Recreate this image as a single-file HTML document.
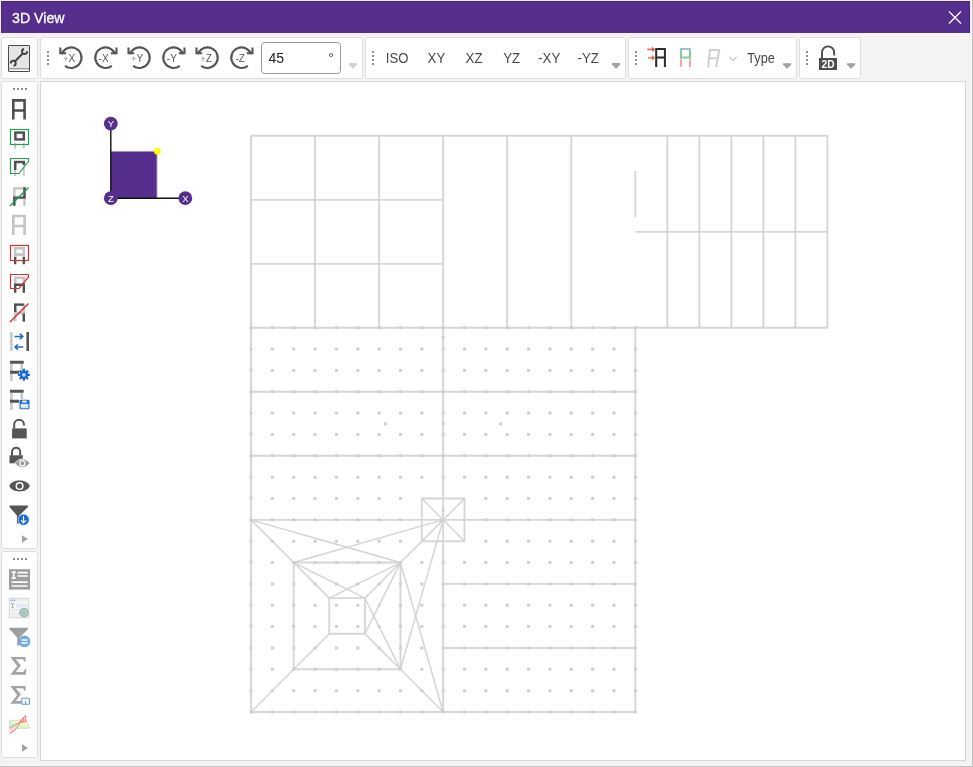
<!DOCTYPE html>
<html><head><meta charset="utf-8">
<style>
html,body{margin:0;padding:0;}
body{width:973px;height:767px;position:relative;overflow:hidden;background:#f3f3f3;font-family:"Liberation Sans",sans-serif;}
.a{position:absolute;}
.grp{position:absolute;background:#fff;border:1px solid #dedede;border-radius:3px;box-sizing:border-box;}
.lbl{position:absolute;font-size:14px;color:#444;line-height:1;white-space:nowrap;}
svg{position:absolute;overflow:visible;will-change:transform;}
.lbl{will-change:transform;}
</style></head><body>
<!-- window frame -->
<div class="a" style="left:0;top:0;width:973px;height:1px;background:#eef0e9;"></div>
<div class="a" style="left:0;top:0;width:1px;height:767px;background:#f0f1ec;"></div>
<div class="a" style="left:971px;top:0;width:1px;height:767px;background:#f8f8f8;"></div>
<div class="a" style="left:0;top:765px;width:973px;height:1px;background:#f8f8f8;"></div>
<div class="a" style="left:972px;top:0;width:1px;height:767px;background:#c0c0c0;"></div>
<div class="a" style="left:0;top:766px;width:973px;height:1px;background:#c0c0c0;"></div>
<div class="a" style="left:970px;top:0;width:1px;height:34px;background:#eef0e9;"></div>
<!-- title -->
<div class="a" style="left:1px;top:1px;width:969px;height:32px;background:#562f8e;box-sizing:border-box;border-top:1px solid #4a2189;border-left:1px solid #4d2489;border-right:1px solid #4d2489;"></div>
<div class="lbl" style="left:12.4px;top:11px;color:#fff;font-size:14.2px;-webkit-text-stroke:0.3px #fff;">3D View</div>
<svg style="left:0;top:0" width="973" height="40"><path d="M949 11.5 L961 23.5 M961 11.5 L949 23.5" stroke="#fff" stroke-width="1.2"/></svg>

<!-- top toolbar groups -->
<div class="grp" style="left:1px;top:37px;width:37px;height:42px;"></div>
<div class="grp" style="left:40px;top:37px;width:323px;height:42px;"></div>
<div class="grp" style="left:365px;top:37px;width:261px;height:42px;"></div>
<div class="grp" style="left:628px;top:37px;width:169px;height:42px;"></div>
<div class="grp" style="left:799px;top:37px;width:62px;height:42px;"></div>

<!-- left toolbar groups -->
<div class="grp" style="left:1px;top:81px;width:37px;height:468px;"></div>
<div class="grp" style="left:1px;top:551px;width:37px;height:207px;"></div>

<!-- canvas -->
<div class="a" style="left:40px;top:81px;width:926px;height:680px;background:#fff;border:1px solid #d6d6d6;box-sizing:border-box;"></div>

<!--DRAW--><svg class="draw" style="left:0;top:0" width="973" height="767"><path d="M251.00 135.80L827.45 135.80M251.00 135.80L251.00 712.00M315.05 135.80L315.05 327.70M379.10 135.80L379.10 327.70M443.15 135.80L443.15 327.70M507.20 135.80L507.20 327.70M571.25 135.80L571.25 327.70M443.15 327.70L443.15 712.00M251.00 199.85L443.15 199.85M251.00 263.90L443.15 263.90M251.00 327.70L827.45 327.70M667.32 135.80L667.32 327.70M699.35 135.80L699.35 327.70M731.38 135.80L731.38 327.70M763.40 135.80L763.40 327.70M795.42 135.80L795.42 327.70M827.45 135.80L827.45 327.70M635.30 171.00L635.30 217.20M635.30 231.90L827.45 231.90M635.30 327.70L635.30 712.00M251.00 391.75L635.30 391.75M251.00 455.80L635.30 455.80M251.00 519.85L635.30 519.85M443.15 583.90L635.30 583.90M443.15 647.95L635.30 647.95M251.00 712.00L635.30 712.00M421.80 498.50H464.50V541.20H421.80ZM293.70 562.55H400.45V669.30H293.70ZM329.28 598.13H364.87V633.72H329.28Z" fill="none" stroke="#d6d6d6" stroke-width="1.9"/><path d="M421.80 498.50L464.50 541.20M464.50 498.50L421.80 541.20M293.70 562.55L329.28 598.13M400.45 562.55L364.87 598.13M293.70 669.30L329.28 633.72M400.45 669.30L364.87 633.72M293.70 562.55L364.87 598.13M400.45 562.55L329.28 598.13M400.45 562.55L364.87 633.72M364.87 598.13L400.45 669.30M251.00 519.85L293.70 562.55M251.00 519.85L400.45 562.55M443.15 519.85L293.70 562.55M443.15 519.85L400.45 562.55M443.15 519.85L400.45 669.30M400.45 562.55L443.15 712.00M400.45 669.30L443.15 712.00M293.70 669.30L251.00 712.00" fill="none" stroke="#d4d4d4" stroke-width="1.5"/><path d="M249.50 326.20h3v3h-3zM249.50 347.55h3v3h-3zM249.50 368.90h3v3h-3zM249.50 390.25h3v3h-3zM249.50 411.60h3v3h-3zM249.50 432.95h3v3h-3zM249.50 454.30h3v3h-3zM249.50 475.65h3v3h-3zM249.50 497.00h3v3h-3zM249.50 518.35h3v3h-3zM249.50 539.70h3v3h-3zM249.50 561.05h3v3h-3zM249.50 582.40h3v3h-3zM249.50 603.75h3v3h-3zM249.50 625.10h3v3h-3zM249.50 646.45h3v3h-3zM249.50 667.80h3v3h-3zM249.50 689.15h3v3h-3zM249.50 710.50h3v3h-3zM270.85 326.20h3v3h-3zM270.85 347.55h3v3h-3zM270.85 368.90h3v3h-3zM270.85 390.25h3v3h-3zM270.85 411.60h3v3h-3zM270.85 432.95h3v3h-3zM270.85 454.30h3v3h-3zM270.85 475.65h3v3h-3zM270.85 497.00h3v3h-3zM270.85 518.35h3v3h-3zM270.85 539.70h3v3h-3zM270.85 561.05h3v3h-3zM270.85 582.40h3v3h-3zM270.85 603.75h3v3h-3zM270.85 625.10h3v3h-3zM270.85 646.45h3v3h-3zM270.85 667.80h3v3h-3zM270.85 689.15h3v3h-3zM270.85 710.50h3v3h-3zM292.20 326.20h3v3h-3zM292.20 347.55h3v3h-3zM292.20 368.90h3v3h-3zM292.20 390.25h3v3h-3zM292.20 411.60h3v3h-3zM292.20 432.95h3v3h-3zM292.20 454.30h3v3h-3zM292.20 475.65h3v3h-3zM292.20 497.00h3v3h-3zM292.20 518.35h3v3h-3zM292.20 539.70h3v3h-3zM292.20 561.05h3v3h-3zM292.20 582.40h3v3h-3zM292.20 603.75h3v3h-3zM292.20 625.10h3v3h-3zM292.20 646.45h3v3h-3zM292.20 667.80h3v3h-3zM292.20 689.15h3v3h-3zM292.20 710.50h3v3h-3zM313.55 326.20h3v3h-3zM313.55 347.55h3v3h-3zM313.55 368.90h3v3h-3zM313.55 390.25h3v3h-3zM313.55 411.60h3v3h-3zM313.55 432.95h3v3h-3zM313.55 454.30h3v3h-3zM313.55 475.65h3v3h-3zM313.55 497.00h3v3h-3zM313.55 518.35h3v3h-3zM313.55 539.70h3v3h-3zM313.55 561.05h3v3h-3zM313.55 582.40h3v3h-3zM313.55 603.75h3v3h-3zM313.55 625.10h3v3h-3zM313.55 646.45h3v3h-3zM313.55 667.80h3v3h-3zM313.55 689.15h3v3h-3zM313.55 710.50h3v3h-3zM334.90 326.20h3v3h-3zM334.90 347.55h3v3h-3zM334.90 368.90h3v3h-3zM334.90 390.25h3v3h-3zM334.90 411.60h3v3h-3zM334.90 432.95h3v3h-3zM334.90 454.30h3v3h-3zM334.90 475.65h3v3h-3zM334.90 497.00h3v3h-3zM334.90 518.35h3v3h-3zM334.90 539.70h3v3h-3zM334.90 561.05h3v3h-3zM334.90 582.40h3v3h-3zM334.90 603.75h3v3h-3zM334.90 625.10h3v3h-3zM334.90 646.45h3v3h-3zM334.90 667.80h3v3h-3zM334.90 689.15h3v3h-3zM334.90 710.50h3v3h-3zM356.25 326.20h3v3h-3zM356.25 347.55h3v3h-3zM356.25 368.90h3v3h-3zM356.25 390.25h3v3h-3zM356.25 411.60h3v3h-3zM356.25 432.95h3v3h-3zM356.25 454.30h3v3h-3zM356.25 475.65h3v3h-3zM356.25 497.00h3v3h-3zM356.25 518.35h3v3h-3zM356.25 539.70h3v3h-3zM356.25 561.05h3v3h-3zM356.25 582.40h3v3h-3zM356.25 603.75h3v3h-3zM356.25 625.10h3v3h-3zM356.25 646.45h3v3h-3zM356.25 667.80h3v3h-3zM356.25 689.15h3v3h-3zM356.25 710.50h3v3h-3zM377.60 326.20h3v3h-3zM377.60 347.55h3v3h-3zM377.60 368.90h3v3h-3zM377.60 390.25h3v3h-3zM377.60 411.60h3v3h-3zM377.60 432.95h3v3h-3zM377.60 454.30h3v3h-3zM377.60 475.65h3v3h-3zM377.60 497.00h3v3h-3zM377.60 518.35h3v3h-3zM377.60 539.70h3v3h-3zM377.60 561.05h3v3h-3zM377.60 582.40h3v3h-3zM377.60 603.75h3v3h-3zM377.60 625.10h3v3h-3zM377.60 646.45h3v3h-3zM377.60 667.80h3v3h-3zM377.60 689.15h3v3h-3zM377.60 710.50h3v3h-3zM398.95 326.20h3v3h-3zM398.95 347.55h3v3h-3zM398.95 368.90h3v3h-3zM398.95 390.25h3v3h-3zM398.95 411.60h3v3h-3zM398.95 432.95h3v3h-3zM398.95 454.30h3v3h-3zM398.95 475.65h3v3h-3zM398.95 497.00h3v3h-3zM398.95 518.35h3v3h-3zM398.95 539.70h3v3h-3zM398.95 561.05h3v3h-3zM398.95 582.40h3v3h-3zM398.95 603.75h3v3h-3zM398.95 625.10h3v3h-3zM398.95 646.45h3v3h-3zM398.95 667.80h3v3h-3zM398.95 689.15h3v3h-3zM398.95 710.50h3v3h-3zM420.30 326.20h3v3h-3zM420.30 347.55h3v3h-3zM420.30 368.90h3v3h-3zM420.30 390.25h3v3h-3zM420.30 411.60h3v3h-3zM420.30 432.95h3v3h-3zM420.30 454.30h3v3h-3zM420.30 475.65h3v3h-3zM420.30 561.05h3v3h-3zM420.30 582.40h3v3h-3zM420.30 603.75h3v3h-3zM420.30 625.10h3v3h-3zM420.30 646.45h3v3h-3zM420.30 667.80h3v3h-3zM420.30 689.15h3v3h-3zM420.30 710.50h3v3h-3zM441.65 326.20h3v3h-3zM441.65 347.55h3v3h-3zM441.65 368.90h3v3h-3zM441.65 390.25h3v3h-3zM441.65 411.60h3v3h-3zM441.65 432.95h3v3h-3zM441.65 454.30h3v3h-3zM441.65 475.65h3v3h-3zM441.65 561.05h3v3h-3zM441.65 582.40h3v3h-3zM441.65 603.75h3v3h-3zM441.65 625.10h3v3h-3zM441.65 646.45h3v3h-3zM441.65 667.80h3v3h-3zM441.65 689.15h3v3h-3zM441.65 710.50h3v3h-3zM463.00 326.20h3v3h-3zM463.00 347.55h3v3h-3zM463.00 368.90h3v3h-3zM463.00 390.25h3v3h-3zM463.00 411.60h3v3h-3zM463.00 432.95h3v3h-3zM463.00 454.30h3v3h-3zM463.00 475.65h3v3h-3zM463.00 561.05h3v3h-3zM463.00 582.40h3v3h-3zM463.00 603.75h3v3h-3zM463.00 625.10h3v3h-3zM463.00 646.45h3v3h-3zM463.00 667.80h3v3h-3zM463.00 689.15h3v3h-3zM463.00 710.50h3v3h-3zM484.35 326.20h3v3h-3zM484.35 347.55h3v3h-3zM484.35 368.90h3v3h-3zM484.35 390.25h3v3h-3zM484.35 411.60h3v3h-3zM484.35 432.95h3v3h-3zM484.35 454.30h3v3h-3zM484.35 475.65h3v3h-3zM484.35 497.00h3v3h-3zM484.35 518.35h3v3h-3zM484.35 539.70h3v3h-3zM484.35 561.05h3v3h-3zM484.35 582.40h3v3h-3zM484.35 603.75h3v3h-3zM484.35 625.10h3v3h-3zM484.35 646.45h3v3h-3zM484.35 667.80h3v3h-3zM484.35 689.15h3v3h-3zM484.35 710.50h3v3h-3zM505.70 326.20h3v3h-3zM505.70 347.55h3v3h-3zM505.70 368.90h3v3h-3zM505.70 390.25h3v3h-3zM505.70 411.60h3v3h-3zM505.70 432.95h3v3h-3zM505.70 454.30h3v3h-3zM505.70 475.65h3v3h-3zM505.70 497.00h3v3h-3zM505.70 518.35h3v3h-3zM505.70 539.70h3v3h-3zM505.70 561.05h3v3h-3zM505.70 582.40h3v3h-3zM505.70 603.75h3v3h-3zM505.70 625.10h3v3h-3zM505.70 646.45h3v3h-3zM505.70 667.80h3v3h-3zM505.70 689.15h3v3h-3zM505.70 710.50h3v3h-3zM527.05 326.20h3v3h-3zM527.05 347.55h3v3h-3zM527.05 368.90h3v3h-3zM527.05 390.25h3v3h-3zM527.05 411.60h3v3h-3zM527.05 432.95h3v3h-3zM527.05 454.30h3v3h-3zM527.05 475.65h3v3h-3zM527.05 497.00h3v3h-3zM527.05 518.35h3v3h-3zM527.05 539.70h3v3h-3zM527.05 561.05h3v3h-3zM527.05 582.40h3v3h-3zM527.05 603.75h3v3h-3zM527.05 625.10h3v3h-3zM527.05 646.45h3v3h-3zM527.05 667.80h3v3h-3zM527.05 689.15h3v3h-3zM527.05 710.50h3v3h-3zM548.40 326.20h3v3h-3zM548.40 347.55h3v3h-3zM548.40 368.90h3v3h-3zM548.40 390.25h3v3h-3zM548.40 411.60h3v3h-3zM548.40 432.95h3v3h-3zM548.40 454.30h3v3h-3zM548.40 475.65h3v3h-3zM548.40 497.00h3v3h-3zM548.40 518.35h3v3h-3zM548.40 539.70h3v3h-3zM548.40 561.05h3v3h-3zM548.40 582.40h3v3h-3zM548.40 603.75h3v3h-3zM548.40 625.10h3v3h-3zM548.40 646.45h3v3h-3zM548.40 667.80h3v3h-3zM548.40 689.15h3v3h-3zM548.40 710.50h3v3h-3zM569.75 326.20h3v3h-3zM569.75 347.55h3v3h-3zM569.75 368.90h3v3h-3zM569.75 390.25h3v3h-3zM569.75 411.60h3v3h-3zM569.75 432.95h3v3h-3zM569.75 454.30h3v3h-3zM569.75 475.65h3v3h-3zM569.75 497.00h3v3h-3zM569.75 518.35h3v3h-3zM569.75 539.70h3v3h-3zM569.75 561.05h3v3h-3zM569.75 582.40h3v3h-3zM569.75 603.75h3v3h-3zM569.75 625.10h3v3h-3zM569.75 646.45h3v3h-3zM569.75 667.80h3v3h-3zM569.75 689.15h3v3h-3zM569.75 710.50h3v3h-3zM591.10 326.20h3v3h-3zM591.10 347.55h3v3h-3zM591.10 368.90h3v3h-3zM591.10 390.25h3v3h-3zM591.10 411.60h3v3h-3zM591.10 432.95h3v3h-3zM591.10 454.30h3v3h-3zM591.10 475.65h3v3h-3zM591.10 497.00h3v3h-3zM591.10 518.35h3v3h-3zM591.10 539.70h3v3h-3zM591.10 561.05h3v3h-3zM591.10 582.40h3v3h-3zM591.10 603.75h3v3h-3zM591.10 625.10h3v3h-3zM591.10 646.45h3v3h-3zM591.10 667.80h3v3h-3zM591.10 689.15h3v3h-3zM591.10 710.50h3v3h-3zM612.45 326.20h3v3h-3zM612.45 347.55h3v3h-3zM612.45 368.90h3v3h-3zM612.45 390.25h3v3h-3zM612.45 411.60h3v3h-3zM612.45 432.95h3v3h-3zM612.45 454.30h3v3h-3zM612.45 475.65h3v3h-3zM612.45 497.00h3v3h-3zM612.45 518.35h3v3h-3zM612.45 539.70h3v3h-3zM612.45 561.05h3v3h-3zM612.45 582.40h3v3h-3zM612.45 603.75h3v3h-3zM612.45 625.10h3v3h-3zM612.45 646.45h3v3h-3zM612.45 667.80h3v3h-3zM612.45 689.15h3v3h-3zM612.45 710.50h3v3h-3zM633.80 326.20h3v3h-3zM633.80 347.55h3v3h-3zM633.80 368.90h3v3h-3zM633.80 390.25h3v3h-3zM633.80 411.60h3v3h-3zM633.80 432.95h3v3h-3zM633.80 454.30h3v3h-3zM633.80 475.65h3v3h-3zM633.80 497.00h3v3h-3zM633.80 518.35h3v3h-3zM633.80 539.70h3v3h-3zM633.80 561.05h3v3h-3zM633.80 582.40h3v3h-3zM633.80 603.75h3v3h-3zM633.80 625.10h3v3h-3zM633.80 646.45h3v3h-3zM633.80 667.80h3v3h-3zM633.80 689.15h3v3h-3zM633.80 710.50h3v3h-3zM383.90 422.30h3v3h-3zM499.10 422.30h3v3h-3zM441.65 336.00h3v3h-3zM441.65 422.30h3v3h-3zM441.65 508.80h3v3h-3z" fill="#cfcfcf"/></svg><!--/DRAW-->
<!--ICONS--><svg style="left:0;top:0" width="973" height="767" font-family="Liberation Sans, sans-serif">
<!-- wrench box -->
<rect x="8.5" y="45.5" width="21" height="26" rx="0.5" fill="#e4e5e5" stroke="#4a4a4a" stroke-width="1"/>
<rect x="9" y="68" width="20" height="1.6" fill="#9c9c9c"/>
<rect x="9" y="69.6" width="20" height="1.4" fill="#fff"/>
<path d="M14.6 61.8 L23.1 53.1" stroke="#404040" stroke-width="2"/>
<path d="M24.07 49.04 A2.5 2.5 0 1 0 26.99 51.28" fill="none" stroke="#404040" stroke-width="1.9"/>
<path d="M13.63 65.76 A2.5 2.5 0 1 0 10.71 63.52" fill="none" stroke="#404040" stroke-width="1.9"/>
<!-- grips -->
<g fill="#8e8e98">
<rect x="47" y="51" width="2" height="2"/><rect x="47" y="55" width="2" height="2"/><rect x="47" y="59" width="2" height="2"/><rect x="47" y="63" width="2" height="2"/>
<rect x="372" y="51" width="2" height="2"/><rect x="372" y="55" width="2" height="2"/><rect x="372" y="59" width="2" height="2"/><rect x="372" y="63" width="2" height="2"/>
<rect x="635" y="51" width="2" height="2"/><rect x="635" y="55" width="2" height="2"/><rect x="635" y="59" width="2" height="2"/><rect x="635" y="63" width="2" height="2"/>
<rect x="806" y="51" width="2" height="2"/><rect x="806" y="55" width="2" height="2"/><rect x="806" y="59" width="2" height="2"/><rect x="806" y="63" width="2" height="2"/>
<rect x="13" y="88" width="2" height="2"/><rect x="17" y="88" width="2" height="2"/><rect x="21" y="88" width="2" height="2"/><rect x="25" y="88" width="2" height="2"/>
<rect x="13" y="558" width="2" height="2"/><rect x="17" y="558" width="2" height="2"/><rect x="21" y="558" width="2" height="2"/><rect x="25" y="558" width="2" height="2"/>
</g>

<!-- rotate icons -->

<g transform="translate(71.3 57.6)"><path d="M-6.3 8.3 A10.3 10.3 0 1 0 -9.8 -3.4" fill="none" stroke="#555" stroke-width="2.2"/><path d="M-11 -10.2 V-4.4 H-5.3" fill="none" stroke="#555" stroke-width="2.1" stroke-linejoin="miter"/></g>
<g transform="translate(105.5 57.6) scale(-1 1)"><path d="M-6.3 8.3 A10.3 10.3 0 1 0 -9.8 -3.4" fill="none" stroke="#555" stroke-width="2.2"/><path d="M-11 -10.2 V-4.4 H-5.3" fill="none" stroke="#555" stroke-width="2.1" stroke-linejoin="miter"/></g>
<g transform="translate(139.5 57.6)"><path d="M-6.3 8.3 A10.3 10.3 0 1 0 -9.8 -3.4" fill="none" stroke="#555" stroke-width="2.2"/><path d="M-11 -10.2 V-4.4 H-5.3" fill="none" stroke="#555" stroke-width="2.1" stroke-linejoin="miter"/></g>
<g transform="translate(173.5 57.6) scale(-1 1)"><path d="M-6.3 8.3 A10.3 10.3 0 1 0 -9.8 -3.4" fill="none" stroke="#555" stroke-width="2.2"/><path d="M-11 -10.2 V-4.4 H-5.3" fill="none" stroke="#555" stroke-width="2.1" stroke-linejoin="miter"/></g>
<g transform="translate(207.5 57.6)"><path d="M-6.3 8.3 A10.3 10.3 0 1 0 -9.8 -3.4" fill="none" stroke="#555" stroke-width="2.2"/><path d="M-11 -10.2 V-4.4 H-5.3" fill="none" stroke="#555" stroke-width="2.1" stroke-linejoin="miter"/></g>
<g transform="translate(241.5 57.6) scale(-1 1)"><path d="M-6.3 8.3 A10.3 10.3 0 1 0 -9.8 -3.4" fill="none" stroke="#555" stroke-width="2.2"/><path d="M-11 -10.2 V-4.4 H-5.3" fill="none" stroke="#555" stroke-width="2.1" stroke-linejoin="miter"/></g>
<g font-size="10" fill="#555">
<text x="63" y="61.7"><tspan fill="#8a8a8a" font-size="9.5">+</tspan>X</text>
<text x="98.6" y="61.7">-X</text>
<text x="131" y="61.7"><tspan fill="#8a8a8a" font-size="9.5">+</tspan>Y</text>
<text x="166.8" y="61.7">-Y</text>
<text x="200.2" y="61.7"><tspan fill="#8a8a8a" font-size="9.5">+</tspan>Z</text>
<text x="235.4" y="61.7">-Z</text>
</g>

<!-- input -->
<rect x="261.5" y="42.5" width="79" height="31" rx="3" fill="#fff" stroke="#9a9a9a" stroke-width="1"/>
<text x="268.5" y="62.8" font-size="14" fill="#222">45</text>
<text x="328.5" y="62" font-size="13" fill="#222">°</text>

<!-- dropdown triangles -->
<g fill="#a2a2aa">
<path d="M349 63 H357 V64.4 L353 68.8 L349 64.4 Z" fill="#cdd0d5"/>
<path d="M612 63 H620.2 V64.3 L616.1 68.9 L612 64.3 Z"/>
<path d="M783 63.2 H791.2 V64.5 L787.1 69 L783 64.5 Z"/>
<path d="M847 63.2 H855.2 V64.5 L851.1 69 L847 64.5 Z"/>
<path d="M22 535.3 V542.7 L28 539 Z"/>
<path d="M22 744 V751.7 L28 747.9 Z"/>
</g>

<!-- view labels -->
<g font-size="14" fill="#474747">
<text transform="translate(385.8 63.4) scale(0.94 1)">ISO</text>
<text transform="translate(427.6 63.4) scale(0.95 1)">XY</text>
<text transform="translate(465.6 63.4) scale(0.95 1)">XZ</text>
<text transform="translate(503.2 63.4) scale(0.95 1)">YZ</text>
<text transform="translate(538.1 63.4) scale(0.95 1)">-XY</text>
<text transform="translate(577.5 63.4) scale(0.95 1)">-YZ</text>
<text x="747.3" y="63.3" textLength="27.6" lengthAdjust="spacingAndGlyphs">Type</text>
</g>

<!-- display icons -->
<path d="M656.2 67 V49 H664.9 V67 M656.2 57.5 H664.9" fill="none" stroke="#2a2a2a" stroke-width="2"/>
<path d="M647.2 49.4 H653" stroke="#e05545" stroke-width="1.5"/><path d="M652 46.8 L655.2 49.4 L652 52 Z" fill="#e05545"/>
<path d="M648 57.8 H653" stroke="#ec8a80" stroke-width="2"/><path d="M652 55.2 L655.2 57.8 L652 60.4 Z" fill="#e06050"/>
<rect x="680" y="48" width="11" height="2" fill="#a2bde3"/>
<path d="M681 50 V58.6 M690 50 V58.6 M680 57.5 H691" stroke="#84d09c" stroke-width="2"/>
<path d="M681 58.6 V67 M690 58.6 V67" stroke="#eeaaa2" stroke-width="2"/>
<path d="M708.2 67.4 Q708.6 60 710 50 H719.3 Q718 58 716 67.4 M709.3 58.3 H718" fill="none" stroke="#d0d0d0" stroke-width="2"/>
<path d="M729.1 56.6 L733 60.5 L736.9 56.6" fill="none" stroke="#c8c8c8" stroke-width="1.2"/>

<!-- 2D lock -->
<path d="M822 58 V52.5 A6.1 6.1 0 0 1 834.2 52.5 V55.4" fill="none" stroke="#4d4d4d" stroke-width="1.9"/>
<rect x="819" y="58" width="18" height="12" fill="#4d4d4d"/>
<text x="828" y="67.8" font-size="10.2" font-weight="bold" fill="#fff" text-anchor="middle">2D</text>
</svg>
<!--/ICONS-->
<!--LEFT--><svg style="left:0;top:0" width="973" height="767" font-family="Liberation Sans, sans-serif">
<!-- 1 frame A -->
<path d="M13.3 119.6 V100.4 H24.6 V119.6 M13.3 110.5 H24.6" fill="none" stroke="#505050" stroke-width="2.6"/>
<!-- 2 green square -->
<path d="M15.2 143 V148.5 M23.8 143 V148.5" stroke="#c8c8c8" stroke-width="2"/>
<rect x="15.4" y="132.6" width="8.4" height="6.8" fill="none" stroke="#505050" stroke-width="2.5"/>
<rect x="10.5" y="129.5" width="18" height="15" fill="none" stroke="#22a04a" stroke-width="1.2"/>
<!-- 3 green trapezoid -->
<path d="M15.2 162 V176 M23.8 166 V176" stroke="#c8c8c8" stroke-width="2"/>
<path d="M15.2 170 V162 H23.8 V165" fill="none" stroke="#505050" stroke-width="2.5"/>
<path d="M10.5 158.5 H28.5 V161.3 L19 173.5 H10.5 Z" fill="none" stroke="#22a04a" stroke-width="1.2"/>
<!-- 4 green slash -->
<path d="M14.3 205.8 V188.4 H24.5 V205.8" fill="none" stroke="#c4c4c4" stroke-width="2.4"/>
<path d="M14.3 205.8 V197.6 H24.5 V187.2" fill="none" stroke="#505050" stroke-width="2.4"/>
<path d="M10 206 L28.5 187.5" stroke="#22a04a" stroke-width="1.5"/>
<!-- 5 gray A -->
<path d="M13.3 235 V216 H24.6 V235 M13.3 226 H24.6" fill="none" stroke="#c4c4c4" stroke-width="2.6"/>
<!-- 6 red square -->
<path d="M15.2 256.5 V264.2 M23.8 256.5 V264.2" stroke="#505050" stroke-width="2.3"/>
<path d="M15.2 257 V248.3 H23.8 V257 M15.2 254.6 H23.8" fill="none" stroke="#c4c4c4" stroke-width="2.6"/>
<rect x="10.5" y="245.5" width="18" height="15" fill="none" stroke="#d03030" stroke-width="1.2"/>
<!-- 7 red trapezoid -->
<path d="M15.2 285 V277.8 H23.8 V285" fill="none" stroke="#c4c4c4" stroke-width="2.5"/>
<path d="M15.2 292.7 V284.8 H23.8 V292.7" fill="none" stroke="#505050" stroke-width="2.4"/>
<path d="M10.5 274.5 H28.5 V277 L19 288.5 H10.5 Z" fill="none" stroke="#d03030" stroke-width="1.2"/>
<!-- 8 red slash -->
<path d="M15.2 321.5 V304.6 H23.8 V321.5 M15.2 313 H23.8" fill="none" stroke="#c4c4c4" stroke-width="2.4"/>
<path d="M15.2 312 V304.6 H23.8 M23.8 313.5 V321.5" fill="none" stroke="#505050" stroke-width="2.4"/>
<path d="M10 322 L28.5 303.5" stroke="#d03030" stroke-width="1.5"/>
<!-- 9 blue arrows -->
<rect x="10" y="332" width="2.6" height="19" fill="#c8c8c8"/>
<rect x="26.4" y="332" width="2.6" height="19" fill="#555"/>
<path d="M14.5 336.4 H22.8 M19.8 333.6 L22.8 336.4 L19.8 339.2 M23.3 347 H15 M18 344.2 L15 347 L18 349.8" fill="none" stroke="#1a6bd0" stroke-width="1.5"/>
<!-- 10 gear -->
<path d="M11.4 364 V381 M21.8 364 V371" stroke="#c8c8c8" stroke-width="2.6"/>
<path d="M10 362.2 H23.7 M10 372.2 H19" stroke="#555" stroke-width="3"/>
<g transform="translate(23.9 374.8)">
<circle r="4.3" fill="#1a6bd0"/>
<path d="M0 -6 V6 M-6 0 H6 M-4.2 -4.2 L4.2 4.2 M4.2 -4.2 L-4.2 4.2" stroke="#1a6bd0" stroke-width="2.2"/>
<circle r="1.9" fill="#b9d4f2"/>
</g>
<!-- 11 save -->
<path d="M11.4 393 V410 M21.8 393 V399" stroke="#c8c8c8" stroke-width="2.6"/>
<path d="M10 391.2 H23.7 M10 401.2 H19" stroke="#555" stroke-width="3"/>
<rect x="19.5" y="399.7" width="10" height="9.6" rx="1.3" fill="#1a6bd0"/>
<rect x="22.2" y="400.6" width="4.4" height="1.9" fill="#fff"/>
<rect x="20.6" y="403.8" width="7.8" height="4.5" fill="#d2e2f6"/>
<path d="M20.8 406 H28.2" stroke="#fff" stroke-width="0.7"/>
<!-- 12 unlock -->
<rect x="12.1" y="428.4" width="14.6" height="10" fill="#555"/>
<path d="M14.2 428.6 V424.6 A4.9 4.9 0 0 1 24 424.6 V425.6" fill="none" stroke="#555" stroke-width="2"/>
<!-- 13 lock eye -->
<rect x="9.5" y="455.3" width="13.3" height="8" fill="#555"/>
<path d="M12 455.6 V451.8 A4.1 4.1 0 0 1 20.2 451.8 V455.6" fill="none" stroke="#555" stroke-width="2"/>
<path d="M14.6 463.2 Q22.3 454.5 30 463.2 Q22.3 471.9 14.6 463.2 Z" fill="#999" stroke="#fff" stroke-width="0.8"/>
<circle cx="22.3" cy="463.2" r="2.6" fill="none" stroke="#fff" stroke-width="1.2"/>
<!-- 14 eye -->
<path d="M9.4 486 C11.5 478.6 27.5 478.6 29.8 486 C27.5 493.2 11.5 493.2 9.4 486 Z" fill="#555"/>
<circle cx="19.6" cy="486" r="3.3" fill="none" stroke="#fff" stroke-width="1.5"/>
<!-- 15 filter -->
<path d="M9.5 505.6 H27.9 V507 L19.3 515.4 V523.6 H16.9 V515.4 L9.5 507 Z" fill="#555"/>
<circle cx="23.6" cy="519.7" r="5.6" fill="#1a6bd0" stroke="#fff" stroke-width="0.6"/>
<path d="M23.5 516 V522.6 M21 520.4 L23.5 522.8 L26 520.4" fill="none" stroke="#fff" stroke-width="1.2"/>

<!-- group 2 -->
<rect x="9" y="569.2" width="21" height="20.4" fill="#9e9e9e"/>
<path d="M11.6 572.2 H15.8 M13.7 572.2 V578.2 M11.6 578.2 H15.8 M17.5 572.6 H27.6 M17.5 576 H27.6 M11.6 582.2 H27.6 M11.6 586 H27.6" stroke="#fff" stroke-width="1.7"/>
<rect x="9.3" y="598.3" width="19.4" height="19.4" fill="#f6f7f8" stroke="#cfcfcf" stroke-width="0.9"/>
<rect x="10" y="599" width="18" height="2.6" fill="#eeeeee"/>
<path d="M10.2 600.3 H16" stroke="#8fb4df" stroke-width="0.9"/>
<path d="M11.2 602.5 Q12.4 606 12.5 605 V607.3 M11.6 607.6 H13.6 M13.8 602.5 Q12.6 606 12.5 605" fill="none" stroke="#9a9a9a" stroke-width="0.8"/>
<rect x="16.2" y="603.8" width="11" height="3.8" fill="#e3eaf3"/>
<rect x="10.5" y="609" width="9" height="1.8" fill="#e6ebf0"/>
<rect x="10.5" y="612.6" width="9" height="1.8" fill="#e6ebf0"/>
<rect x="10.5" y="615.2" width="9" height="1.6" fill="#e9edf1"/>
<circle cx="24" cy="612.6" r="4.9" fill="#a2beb6"/>
<circle cx="24" cy="612.6" r="2.4" fill="none" stroke="#d3e2dd" stroke-width="0.8"/>
<path d="M9.5 627.8 H28 V629.2 L19.6 637.4 V645.4 H17.2 V637.4 L9.5 629.2 Z" fill="#9e9e9e"/>
<circle cx="24.5" cy="641.4" r="5.8" fill="#72a9e6"/>
<path d="M21.5 640 H27.5 M21.5 643 H27.5" stroke="#fff" stroke-width="1.3"/>
<path d="M10.4 657.1 H25.4 L25.6 661.8 H24.3 Q23.8 659.2 22.5 659.2 H15.8 L20.9 665.4 L15.8 672 H23 Q24.3 672 24.9 668.9 H26.3 L25.8 674.7 H10.4 L17.2 665.9 Z" fill="#a4a4a4"/>
<path transform="translate(0 29)" d="M10.4 657.1 H25.4 L25.6 661.8 H24.3 Q23.8 659.2 22.5 659.2 H15.8 L20.9 665.4 L15.8 672 H23 Q24.3 672 24.9 668.9 H26.3 L25.8 674.7 H10.4 L17.2 665.9 Z" fill="#a4a4a4"/>
<rect x="21.8" y="698.3" width="7.6" height="6" rx="0.8" fill="#fff" stroke="#5a9be6" stroke-width="1.1"/>
<path d="M25.6 701 V704.3" stroke="#5a9be6" stroke-width="1"/>
<!-- chart -->
<defs><linearGradient id="cg" x1="0" y1="1" x2="1" y2="0"><stop offset="0" stop-color="#c6eef4"/><stop offset="0.35" stop-color="#d2f6c8"/><stop offset="0.7" stop-color="#f6f6c0"/><stop offset="1" stop-color="#ecc8f0"/></linearGradient></defs>
<path d="M9.4 720.3 H26.3 L29.6 728.3 H9.4 Z" fill="url(#cg)" stroke="#d4d4d4" stroke-width="0.8"/>
<path d="M9.4 728.6 V733.4 Q15.5 731.5 17.8 726.5 L17.2 728.6 Z" fill="#fbd6d6"/>
<path d="M20 722.6 Q22.8 717.6 25.8 715.2 V721.6 Z" fill="#f9dede"/>
<path d="M9.6 727.9 Q15 725.2 19.6 722.6 Q22.8 717.6 25.8 715.2 M10 733.3 Q15.8 731 17.8 726.2 Q19 723.6 20.4 722.2 M21.6 719.2 V722 M23.6 717 V721.8 M25.7 715.4 V721.6 M19.6 722.6 L26 721.5" fill="none" stroke="#e87272" stroke-width="0.9"/>
<!-- axis gizmo -->
<rect x="110.8" y="151.2" width="46.3" height="47" fill="#562f8e"/>
<path d="M110.8 151.2 H157.1 V198.2" fill="none" stroke="#c9c2d6" stroke-width="0.8"/>
<path d="M110.8 123.6 V198.2 H185.3" fill="none" stroke="#111" stroke-width="1.4"/>
<circle cx="157.4" cy="151.2" r="3.4" fill="#ffff00"/>
<circle cx="110.8" cy="123.6" r="6.9" fill="#562f8e"/>
<circle cx="110.8" cy="198.2" r="6.9" fill="#562f8e"/>
<circle cx="185.3" cy="198.2" r="6.9" fill="#562f8e"/>
<g font-size="9.5" fill="#fff" text-anchor="middle">
<text x="110.8" y="127">Y</text>
<text x="110.8" y="201.6">Z</text>
<text x="185.3" y="201.6">X</text>
</g>
</svg>
<!--/LEFT-->
</body></html>
